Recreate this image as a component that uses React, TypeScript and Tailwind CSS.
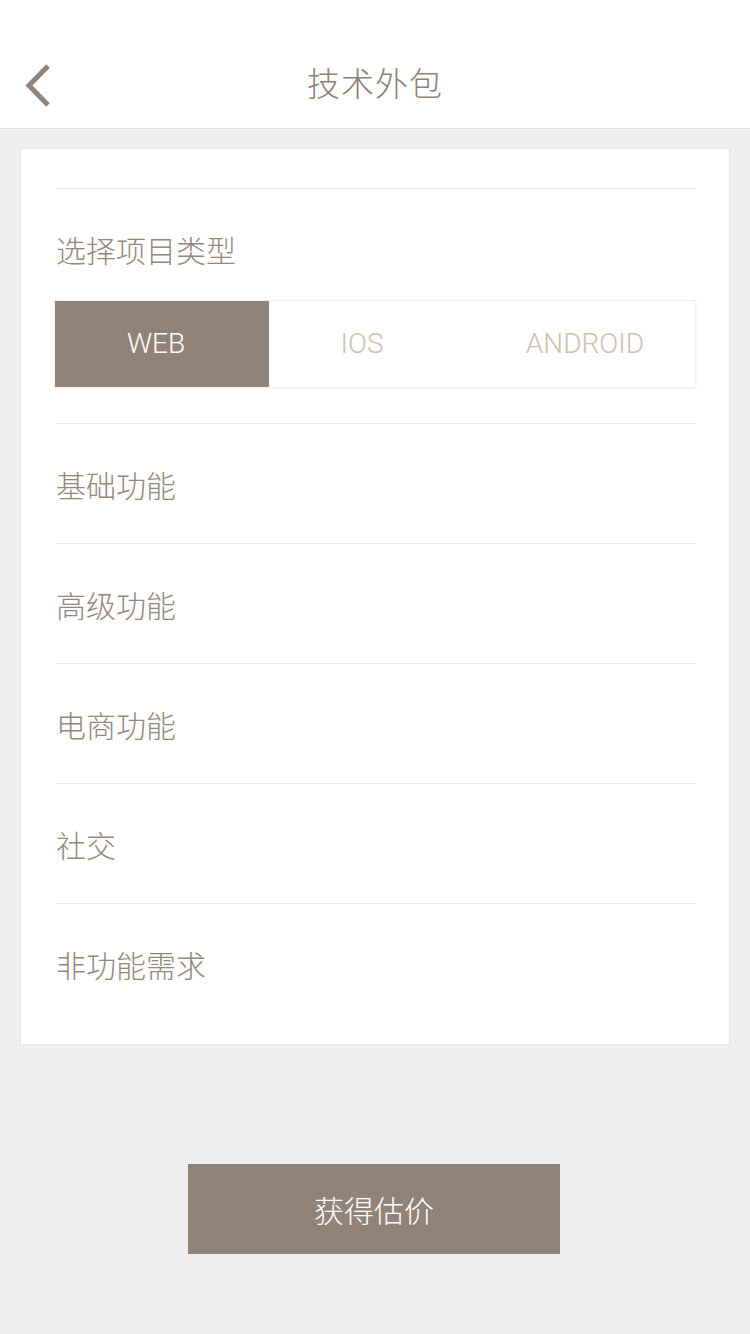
import React from "react";

const cjk = { fontFamily: '"Noto Sans CJK SC", "Noto Sans", sans-serif' };
const latin = { fontFamily: 'Roboto, "Noto Sans CJK SC", sans-serif' };

function Row({ label, last }: { label: string; last?: boolean }) {
  return (
    <div
      className={`h-[120px] flex items-center ${last ? "" : "border-b border-[#ebe8e5]"}`}
    >
      <span className="text-[30px] font-light text-[#94877d] leading-none" style={cjk}>
        {label}
      </span>
    </div>
  );
}

export default function App() {
  return (
    <div className="w-[750px] h-[1334px] bg-[#eeeeee] flex flex-col" style={cjk}>
      <div className="h-[129px] bg-white border-b border-[#e3dfda] relative flex items-end justify-center pb-[29px] shrink-0">
        <svg
          className="absolute left-[24px] top-[64px]"
          width="28"
          height="44"
          viewBox="0 0 28 44"
        >
          <path d="M24 2 L5 21.5 L24 41" fill="none" stroke="#918379" strokeWidth="5" />
        </svg>
        <span className="text-[33px] font-light text-[#8e8178] leading-none tracking-[1px]">
          技术外包
        </span>
      </div>

      <div className="mx-[20px] mt-[19px] bg-white border border-[#e6e6e6] pl-[35px] pr-[33px] pt-[39px] pb-[20px]">
        <div className="border-t border-[#ebe8e5]" />
        <div className="h-[111px] flex items-center pt-[9px]">
          <span className="text-[30px] font-light text-[#94877d] leading-none">选择项目类型</span>
        </div>
        <div className="-ml-[2px] h-[88px] grid grid-cols-[214px_214px_1fr] border border-[#f0f0f0] shadow-[0_1px_3px_rgba(0,0,0,0.06)]">
          <div className="bg-[#928379] flex items-center justify-center pr-[12px]">
            <span className="text-[28px] font-light text-white" style={latin}>WEB</span>
          </div>
          <div className="flex items-center justify-center pr-[28px]">
            <span className="text-[28px] font-light text-[#cdc1b1]" style={latin}>IOS</span>
          </div>
          <div className="flex items-center justify-center pr-[8px]">
            <span className="text-[28px] font-light text-[#cdc1b1]" style={latin}>ANDROID</span>
          </div>
        </div>
        <div className="h-[36px] border-b border-[#ebe8e5]" />
        <Row label="基础功能" />
        <Row label="高级功能" />
        <Row label="电商功能" />
        <Row label="社交" />
        <Row label="非功能需求" last />
      </div>

      <div className="flex mt-[119px] pl-[188px]">
        <button className="w-[372px] h-[90px] bg-[#928379] flex items-center justify-center">
          <span className="text-[30px] font-light text-white leading-none" style={cjk}>
            获得估价
          </span>
        </button>
      </div>
    </div>
  );
}
